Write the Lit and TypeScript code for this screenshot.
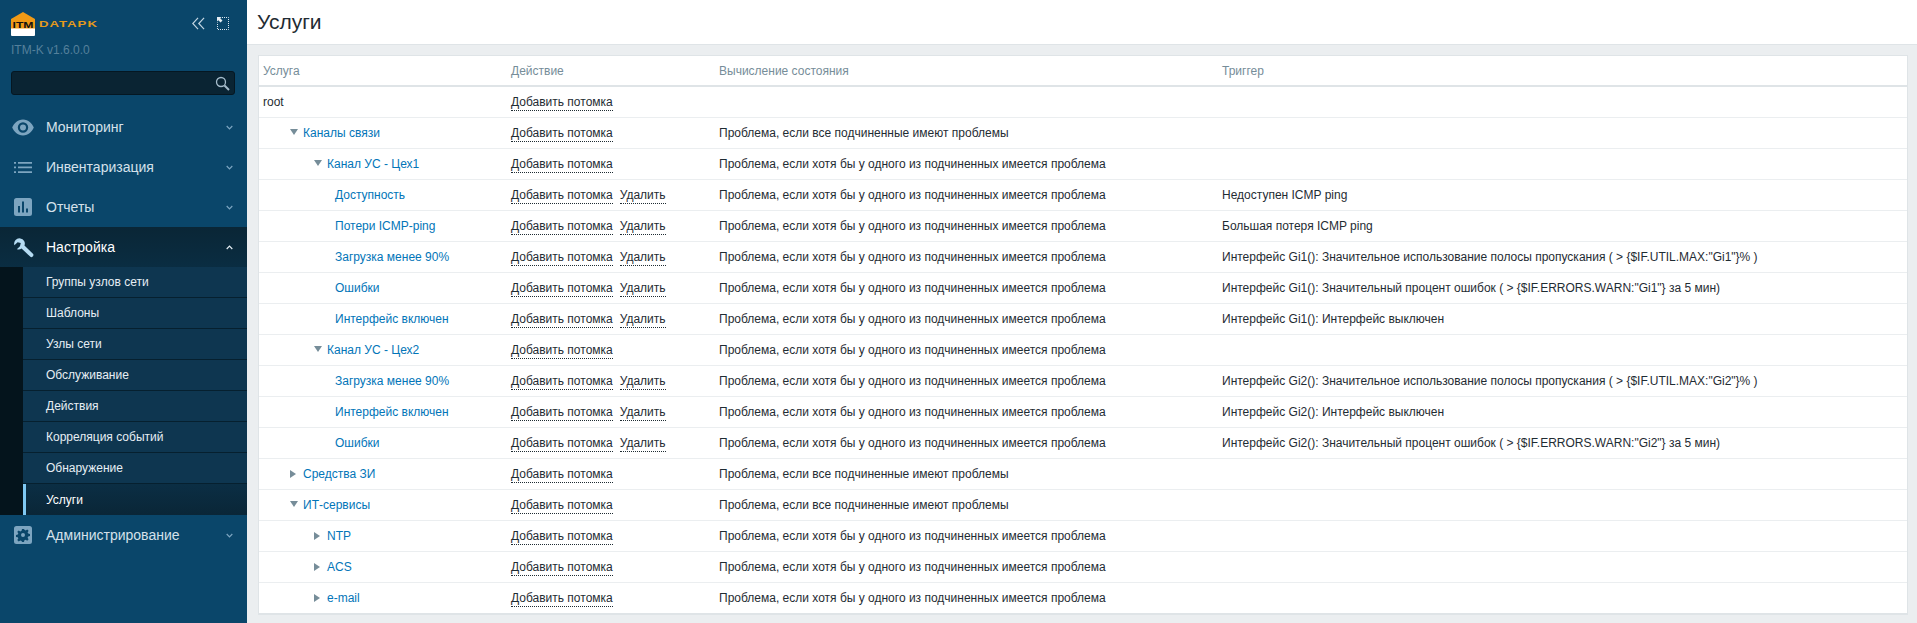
import { css, html, svg, LitElement } from 'lit';
import { customElement } from 'lit/decorators.js';

interface Row {
  name: string;
  level: number;
  arrow?: 'open' | 'closed';
  remove?: boolean;
  calc?: string;
  trigger?: string;
}

const ANY = 'Проблема, если хотя бы у одного из подчиненных имеется проблема';
const ALL = 'Проблема, если все подчиненные имеют проблемы';

const ROWS: Row[] = [
  { name: 'Каналы связи', level: 1, arrow: 'open', calc: ALL },
  { name: 'Канал УС - Цех1', level: 2, arrow: 'open', calc: ANY },
  { name: 'Доступность', level: 3, remove: true, calc: ANY, trigger: 'Недоступен ICMP ping' },
  { name: 'Потери ICMP-ping', level: 3, remove: true, calc: ANY, trigger: 'Большая потеря ICMP ping' },
  { name: 'Загрузка менее 90%', level: 3, remove: true, calc: ANY, trigger: 'Интерфейс Gi1(): Значительное использование полосы пропускания ( > {$IF.UTIL.MAX:"Gi1"}% )' },
  { name: 'Ошибки', level: 3, remove: true, calc: ANY, trigger: 'Интерфейс Gi1(): Значительный процент ошибок ( > {$IF.ERRORS.WARN:"Gi1"} за 5 мин)' },
  { name: 'Интерфейс включен', level: 3, remove: true, calc: ANY, trigger: 'Интерфейс Gi1(): Интерфейс выключен' },
  { name: 'Канал УС - Цех2', level: 2, arrow: 'open', calc: ANY },
  { name: 'Загрузка менее 90%', level: 3, remove: true, calc: ANY, trigger: 'Интерфейс Gi2(): Значительное использование полосы пропускания ( > {$IF.UTIL.MAX:"Gi2"}% )' },
  { name: 'Интерфейс включен', level: 3, remove: true, calc: ANY, trigger: 'Интерфейс Gi2(): Интерфейс выключен' },
  { name: 'Ошибки', level: 3, remove: true, calc: ANY, trigger: 'Интерфейс Gi2(): Значительный процент ошибок ( > {$IF.ERRORS.WARN:"Gi2"} за 5 мин)' },
  { name: 'Средства ЗИ', level: 1, arrow: 'closed', calc: ALL },
  { name: 'ИТ-сервисы', level: 1, arrow: 'open', calc: ALL },
  { name: 'NTP', level: 2, arrow: 'closed', calc: ANY },
  { name: 'ACS', level: 2, arrow: 'closed', calc: ANY },
  { name: 'e-mail', level: 2, arrow: 'closed', calc: ANY },
];

const SUBMENU = ['Группы узлов сети', 'Шаблоны', 'Узлы сети', 'Обслуживание', 'Действия', 'Корреляция событий', 'Обнаружение', 'Услуги'];

const ICONS = {
  eye: svg`<path fill-rule="evenodd" d="M11 2.500C5.500 2.500 2 6.500.2 10.500 2 14.500 5.500 18.500 11 18.500s9-4 10.800-8C20 6.500 16.500 2.500 11 2.500zm0 2.800a5.200 5.200 0 1 1 0 10.400 5.200 5.200 0 0 1 0-10.400zm0 2.200a3 3 0 1 0 0 6 3 3 0 0 0 0-6z"/>`,
  list: svg`<path d="M2 5h2v1.700H2zM6 5h14v1.700H6zM2 9.600h2v1.700H2zM6 9.600h14v1.700H6zM2 14.300h2V16H2zM6 14.300h14V16H6z"/>`,
  chart: svg`<path fill-rule="evenodd" d="M3.500 0h13A2.500 2.500 0 0 1 19 2.500v13a2.500 2.500 0 0 1-2.500 2.500h-13A2.500 2.500 0 0 1 1 15.500v-13A2.500 2.500 0 0 1 3.500 0zM5 8v6.500h2V8zM9 3.500v11h2v-11zM13 10.500v4h2v-4z"/>`,
  wrench: svg`<path d="M8.300.6a6 6 0 0 0-6.900 7.300l.1.400L5.200 4.900l3.600 1-.9 3.700-3.600 3.300.4.100a6 6 0 0 0 5-.9l9.800 9.300c.9.800 2.100.8 2.900 0l.4-.5c.7-.8.700-2-.1-2.800l-9.700-9.300A6 6 0 0 0 8.300.6z"/>`,
  gear: svg`<path fill-rule="evenodd" d="M3.500 0h13A2.500 2.500 0 0 1 19 2.500v13a2.500 2.500 0 0 1-2.500 2.500h-13A2.500 2.500 0 0 1 1 15.500v-13A2.500 2.500 0 0 1 3.500 0zM9 3l-.4 1.800-1.300.6-1.600-1L4.300 5.800l1 1.600-.5 1.200-1.800.5v1.800l1.800.4.500 1.300-1 1.500 1.400 1.400 1.600-1 1.300.5L9 16h2l.4-1.800 1.300-.5 1.500 1 1.400-1.400-1-1.500.6-1.300 1.800-.4V8.100l-1.800-.5-.6-1.200 1-1.600-1.400-1.400-1.500 1-1.300-.6L11 3zM10 7a2 2 0 1 1 0 4 2 2 0 0 1 0-4z"/>`,
};

type IconName = keyof typeof ICONS;

const MENU_TOP: { name: string; icon: IconName; box: string }[] = [
  { name: 'Мониторинг', icon: 'eye', box: '0 0 24 21' },
  { name: 'Инвентаризация', icon: 'list', box: '0 0 24 21' },
  { name: 'Отчеты', icon: 'chart', box: '-1 -1 24 21' },
];

@customElement('app-root')
export default class AppRoot extends LitElement {
  static styles = css`
    :host {
      display: flex;
      width: 1917px;
      height: 623px;
      overflow: hidden;
      font-family: 'Liberation Sans', Arial, sans-serif;
      font-size: 12px;
      color: #1f2c33;
      background: #ebeef0;
    }

    .sidebar {
      flex: 0 0 247px;
      background: #0a466a;
      display: flex;
      flex-direction: column;
    }

    .brand {
      height: 39px;
      padding: 12px 0 0 11px;
      box-sizing: border-box;
      display: flex;
      align-items: flex-start;
    }

    .brand__logo {
      display: block;
    }

    .brand__name {
      margin: 6px 0 0 4px;
      font-size: 8.500px;
      line-height: 12px;
      font-weight: bold;
      letter-spacing: 0.600px;
      color: #e59a1c;
      transform: scaleX(1.560);
      transform-origin: left center;
    }

    .brand__tools {
      margin: 5px 0 0 auto;
      padding-right: 18px;
      display: flex;
      gap: 12px;
    }

    .version {
      height: 32px;
      line-height: 22px;
      padding-left: 11px;
      color: #55809b;
    }

    .search {
      position: relative;
      margin-left: 11px;
      width: 224px;
      height: 24px;
      box-sizing: border-box;
      background: #0a2433;
      border: 1px solid #051722;
      border-radius: 3px;
    }

    .search svg {
      position: absolute;
      right: 4px;
      top: 4px;
    }

    .menu {
      margin-top: 12px;
    }

    .item {
      height: 40px;
      display: flex;
      align-items: center;
      padding: 0 14px 0 12px;
      font-size: 14px;
      color: #d5e1ea;
    }

    .item svg.icon {
      flex: none;
      width: 24px;
      height: 21px;
      fill: #7da5c0;
    }

    .item__label {
      margin-left: 10px;
      flex: 1;
    }

    .item--active {
      background: linear-gradient(#0a2636, #0a2d42);
      color: #ffffff;
    }

    .item--active svg.icon {
      fill: #b5dbf2;
    }

    .submenu {
      border-left: 23px solid #04141c;
      background: #0e3650;
    }

    .submenu__item {
      height: 31px;
      box-sizing: border-box;
      display: flex;
      align-items: center;
      padding-left: 23px;
      border-bottom: 1px solid #06202f;
      color: #e6eef4;
    }

    .submenu__item:last-child {
      border-bottom: none;
    }

    .submenu__item--active {
      background: linear-gradient(#0b2e44, #0a2637);
      border-left: 3px solid #7fc8f2;
      padding-left: 20px;
      color: #ffffff;
    }

    .content {
      flex: 1;
      min-width: 0;
    }

    .title {
      height: 45px;
      box-sizing: border-box;
      background: #ffffff;
      border-bottom: 1px solid #dfe4e7;
      padding-left: 10px;
      font-size: 21px;
      line-height: 43px;
      font-weight: normal;
      margin: 0;
      color: #1f2c33;
    }

    .panel {
      margin: 10px 9px 0 11px;
      background: #ffffff;
      border: 1px solid #dfe4e7;
      border-bottom-width: 2px;
    }

    table {
      width: 100%;
      table-layout: fixed;
      border-collapse: collapse;
    }

    th {
      padding: 0 5px 0 4px;
      text-align: left;
      font-weight: normal;
      color: #768d99;
      border-bottom: 2px solid #dfe4e7;
      box-sizing: border-box;
    }

    thead tr {
      height: 30px;
    }

    td {
      height: 31px;
      padding: 0 5px 0 4px;
      box-sizing: border-box;
      border-bottom: 1px solid #ebeef0;
      white-space: nowrap;
    }

    tbody tr:last-child td {
      border-bottom: none;
    }

    .col-name { width: 248px; }
    .col-action { width: 208px; }
    .col-calc { width: 503px; }

    .root {
      color: #1f2c33;
    }

    .tree {
      display: flex;
      align-items: center;
    }

    .tree__arrow {
      flex: none;
      width: 13px;
      height: 8px;
    }

    .tree__arrow svg {
      display: block;
      fill: #768d99;
    }

    .tree__name {
      color: #0275b8;
    }

    .action {
      color: #1f2c33;
      border-bottom: 1px dotted #1f2c33;
      padding-bottom: 1px;
    }

    .action + .action {
      margin-left: 7px;
    }
  `;

  private chevron(up: boolean, color: string) {
    return html`<svg width="7" height="5" viewBox="0 0 7 5" fill="none" stroke=${color} stroke-width="1.200">
      <path d=${up ? 'M.7 4 3.500 1.200 6.300 4' : 'M.7 1 3.500 3.800 6.300 1'}></path>
    </svg>`;
  }

  private renderLogo() {
    return html`<svg class="brand__logo" width="24" height="24" viewBox="0 0 24 24">
      <path d="M0 7 12 0l12 7v8H0z" fill="#f09a16"></path>
      <path d="M0 8h24v9H0z" fill="#f09a16"></path>
      <path d="M0 16.500h24V23a1 1 0 0 1-1 1H1a1 1 0 0 1-1-1z" fill="#ffffff"></path>
      <text x="12" y="16" text-anchor="middle" font-family="Liberation Sans" font-weight="bold" font-size="9.500" textLength="21" lengthAdjust="spacingAndGlyphs" fill="#111111">ITM</text>
    </svg>`;
  }

  private renderItem(name: string, icon: IconName, box: string) {
    return html`<div class="item">
      <svg class="icon" viewBox=${box}>${ICONS[icon]}</svg>
      <span class="item__label">${name}</span>
      ${this.chevron(false, '#7da5c0')}
    </div>`;
  }

  private renderRow(row: Row) {
    const indent = row.level * 24;
    return html`<tr>
      <td>
        <div class="tree" style="padding-left: ${row.arrow ? indent + 3 : indent}px">
          ${row.arrow === 'open'
            ? html`<span class="tree__arrow"><svg width="8" height="6" viewBox="0 0 8 6"><path d="M0 0h8L4 6z"></path></svg></span>`
            : row.arrow === 'closed'
              ? html`<span class="tree__arrow"><svg width="6" height="8" viewBox="0 0 6 8"><path d="M0 0v8l6-4z"></path></svg></span>`
              : ''}
          <span class="tree__name">${row.name}</span>
        </div>
      </td>
      <td>
        <span class="action">Добавить потомка</span>${row.remove ? html`<span class="action">Удалить</span>` : ''}
      </td>
      <td>${row.calc ?? ''}</td>
      <td>${row.trigger ?? ''}</td>
    </tr>`;
  }

  protected render() {
    return html`
      <aside class="sidebar">
        <div class="brand">
          ${this.renderLogo()}
          <span class="brand__name">DATAPK</span>
          <div class="brand__tools">
            <svg width="13" height="13" viewBox="0 0 14 13" fill="none" stroke="#c3d6e3" stroke-width="1.300">
              <path d="M6.500.5.800 6.500l5.700 6M13 .5 7.300 6.500l5.700 6"></path>
            </svg>
            <svg width="12" height="13" viewBox="0 0 12 13">
              <path d="M5 .5h6.500v12H.5V5.500" fill="none" stroke="#dbe7ef" stroke-dasharray="1 1"></path>
              <path d="M0 0h4.500L3.200 1.300 5.500 3.600 3.600 5.500 1.300 3.200 0 4.500z" fill="#e6eef4"></path>
            </svg>
          </div>
        </div>
        <div class="version">ITM-K v1.6.0.0</div>
        <div class="search">
          <svg width="15" height="15" viewBox="0 0 15 15" fill="none" stroke="#a5bccb">
            <circle cx="6" cy="6" r="4.500" stroke-width="1.300"></circle>
            <path d="M9.500 9.500 14 14" stroke-width="2"></path>
          </svg>
        </div>
        <nav class="menu">
          ${MENU_TOP.map(m => this.renderItem(m.name, m.icon, m.box))}
          <div class="item item--active">
            <svg class="icon" viewBox="0 -1 25 24">${ICONS.wrench}</svg>
            <span class="item__label">Настройка</span>
            ${this.chevron(true, '#e6eef4')}
          </div>
          <div class="submenu">
            ${SUBMENU.map(
              (s, i) => html`<div class="submenu__item ${i === SUBMENU.length - 1 ? 'submenu__item--active' : ''}">${s}</div>`
            )}
          </div>
          ${this.renderItem('Администрирование', 'gear', '-1 -1 24 21')}
        </nav>
      </aside>
      <main class="content">
        <h1 class="title">Услуги</h1>
        <div class="panel">
          <table>
            <colgroup>
              <col class="col-name" />
              <col class="col-action" />
              <col class="col-calc" />
              <col />
            </colgroup>
            <thead>
              <tr>
                <th>Услуга</th>
                <th>Действие</th>
                <th>Вычисление состояния</th>
                <th>Триггер</th>
              </tr>
            </thead>
            <tbody>
              <tr>
                <td class="root">root</td>
                <td><span class="action">Добавить потомка</span></td>
                <td></td>
                <td></td>
              </tr>
              ${ROWS.map(r => this.renderRow(r))}
            </tbody>
          </table>
        </div>
      </main>
    `;
  }
}
